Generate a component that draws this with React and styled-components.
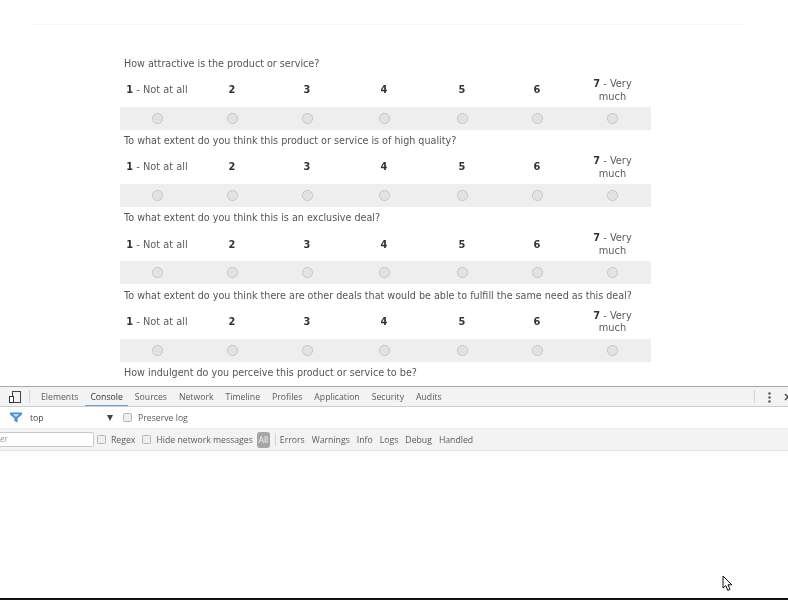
import React from "react";
import styled, { createGlobalStyle } from "styled-components";

const Global = createGlobalStyle`
  html, body { margin: 0; padding: 0; background: #fff; overflow: hidden; }
  #root { width: 788px; height: 600px; overflow: hidden; }
`;

const Page = styled.div`
  width: 788px;
  height: 600px;
  display: flex;
  flex-direction: column;
  overflow: hidden;
  background: #fff;
  filter: blur(0.35px);
`;

const Viewport = styled.main`
  height: 386px;
  flex: none;
  overflow: hidden;
  padding-top: 24px;
  box-sizing: border-box;
`;

const TopRule = styled.div`
  height: 1px;
  margin: 0 44px 0 28px;
  background: #f8f8f8;
`;

const Survey = styled.div`
  margin: 31px 0 0 120px;
  width: 531px;
  font-family: "DejaVu Sans", Verdana, sans-serif;
  color: #4a4a4a;
`;

const Block = styled.section`
  height: 77.2px;
`;

const Question = styled.div`
  height: 16px;
  padding-left: 4px;
  font-size: 9.6px;
  line-height: 16px;
  color: #555;
  white-space: nowrap;
`;

const Scale = styled.div`
  display: grid;
  grid-template-columns: 74px 76px 74px 80px 76px 74px 77px;
`;

const Label = styled.div`
  height: 33px;
  margin-top: 2px;
  padding: 0 12px;
  box-sizing: border-box;
  display: flex;
  align-items: center;
  justify-content: center;
  text-align: center;
  font-size: 9.8px;
  line-height: 12.5px;
  color: #5c5c5c;
  white-space: ${(p) => (p.$wrap ? "normal" : "nowrap")};
  b { color: #333; font-weight: 700; }
`;

const Cell = styled.div`
  height: 23px;
  display: flex;
  align-items: center;
  justify-content: center;
  background: #eeeeee;
`;

const Radio = styled.span`
  width: 9px;
  height: 9px;
  border-radius: 50%;
  border: 1px solid #c2c2c2;
  background: #e2e2e2;
  box-shadow: inset 0 0 1px #fff;
`;

const DevTools = styled.div`
  flex: none;
  height: 64px;
  border-top: 1px solid #a9a9a9;
  font-family: "Open Sans", "Noto Sans", sans-serif;
  font-size: 8.7px;
  color: #5a5a5a;
  overflow: hidden;
`;

const Tabs = styled.div`
  height: 19px;
  display: flex;
  align-items: center;
  background: #f3f3f3;
  border-bottom: 1px solid #cdcdcd;
`;

const DeviceIcon = styled.svg`
  width: 13px;
  height: 13px;
  margin: 1px 0 0 9px;
  flex: none;
`;

const Sep = styled.span`
  width: 1px;
  height: 13px;
  background: #d4d4d4;
  margin: ${(p) => p.$m || "0 6px 0 7px"};
  flex: none;
`;

const Tab = styled.span`
  height: 19px;
  line-height: 21px;
  padding: 0 5px;
  margin-right: ${(p) => p.$mr ?? 2}px;
  box-sizing: border-box;
  white-space: nowrap;
  color: ${(p) => (p.$active ? "#333" : "#5a5a5a")};
  border-bottom: ${(p) => (p.$active ? "1.5px solid #6c9fd8" : "none")};
`;

const Grow = styled.span`
  flex: 1;
`;

const Dots = styled.svg`
  width: 3px;
  height: 11px;
  margin-top: 1px;
  flex: none;
`;

const CloseIcon = styled.svg`
  width: 8px;
  height: 8px;
  margin: 1px -4px 0 13px;
  flex: none;
`;

const FilterRow = styled.div`
  height: 21px;
  display: flex;
  align-items: center;
  background: #fff;
`;

const Funnel = styled.svg`
  width: 12px;
  height: 11px;
  margin-left: 10px;
  flex: none;
`;

const Context = styled.span`
  width: 77px;
  margin-left: 8px;
  color: #444;
  flex: none;
`;

const Caret = styled.span`
  width: 0;
  height: 0;
  border-left: 3.5px solid transparent;
  border-right: 3.5px solid transparent;
  border-top: 6px solid #444;
  margin-right: 10px;
  flex: none;
`;

const Check = styled.span`
  width: 7px;
  height: 7px;
  border: 1px solid #b5b5b5;
  border-radius: 1.5px;
  background: #eee;
  margin-right: ${(p) => p.$mr ?? 5}px;
  flex: none;
`;

const Levels = styled.div`
  height: 21px;
  display: flex;
  align-items: center;
  background: #f3f3f3;
  border-top: 1px solid #eee;
  border-bottom: 1px solid #e2e2e2;
`;

const FilterBox = styled.span`
  width: 93px;
  height: 13px;
  line-height: 13px;
  margin-right: 3px;
  background: #fff;
  border: 1px solid #c8c8c8;
  border-left: none;
  border-radius: 0 2px 2px 0;
  color: #9a9a9a;
  flex: none;
  font-style: italic;
`;

const Opt = styled.span`
  margin-right: ${(p) => p.$mr ?? 6}px;
  white-space: nowrap;
  flex: none;
`;

const All = styled.span`
  width: 13px;
  height: 16px;
  line-height: 16px;
  text-align: center;
  border-radius: 3px;
  background: #a6a6a6;
  color: #f4f4f4;
  flex: none;
`;

const Level = styled.span`
  margin-right: 7px;
  flex: none;
`;

const Blank = styled.div`
  flex: 1;
  display: flex;
  justify-content: flex-end;
  align-items: flex-end;
  padding: 0 55px 6px 0;
`;

const Cursor = styled.svg`
  width: 11px;
  height: 17px;
`;

const BottomBar = styled.div`
  flex: none;
  height: 2px;
  background: #111;
`;

const questions = [
  "How attractive is the product or service?",
  "To what extent do you think this product or service is of high quality?",
  "To what extent do you think this is an exclusive deal?",
  "To what extent do you think there are other deals that would be able to fulfill the same need as this deal?",
  "How indulgent do you perceive this product or service to be?",
];

const tabs = ["Elements", "Console", "Sources", "Network", "Timeline", "Profiles", "Application", "Security", "Audits"];

function Rating() {
  return (
    <Scale>
      <Label><span><b>1</b> - Not at all</span></Label>
      {["2", "3", "4", "5", "6"].map((n) => (
        <Label key={n}><b>{n}</b></Label>
      ))}
      <Label $wrap><span><b>7</b> - Very much</span></Label>
      {[1, 2, 3, 4, 5, 6, 7].map((n) => (
        <Cell key={n}><Radio /></Cell>
      ))}
    </Scale>
  );
}

export default function App() {
  return (
    <Page>
      <Global />
      <Viewport>
        <TopRule />
        <Survey>
          {questions.map((q, i) => (
            <Block key={q}>
              <Question>{q}</Question>
              {i < 4 && <Rating />}
            </Block>
          ))}
        </Survey>
      </Viewport>
      <DevTools>
        <Tabs>
          <DeviceIcon viewBox="0 0 13 13">
            <rect x="3.5" y="0.5" width="8" height="11" fill="none" stroke="#444" strokeWidth="1" />
            <rect x="0.5" y="5.5" width="4" height="6" fill="#fff" stroke="#333" strokeWidth="1" />
          </DeviceIcon>
          <Sep />
          {tabs.map((t) => (
            <Tab key={t} $active={t === "Console"}>{t}</Tab>
          ))}
          <Grow />
          <Sep $m="0 13px 0 0" />
          <Dots viewBox="0 0 3 11">
            <circle cx="1.5" cy="1.5" r="1.2" fill="#555" />
            <circle cx="1.5" cy="5.5" r="1.2" fill="#555" />
            <circle cx="1.5" cy="9.5" r="1.2" fill="#555" />
          </Dots>
          <CloseIcon viewBox="0 0 8 8">
            <path d="M1 1L7 7M7 1L1 7" stroke="#444" strokeWidth="1.4" />
          </CloseIcon>
        </Tabs>
        <FilterRow>
          <Funnel viewBox="0 0 12 11">
            <path d="M0 0.5H12V2.5L7.6 6.2V10.5L4.4 9V6.2L0 2.5Z" fill="#4a90d9" />
            <path d="M2.6 2.2H9.4L6 5Z" fill="#cfe3f5" />
          </Funnel>
          <Context>top</Context>
          <Caret />
          <Check $mr={6} />
          <Opt>Preserve log</Opt>
        </FilterRow>
        <Levels>
          <FilterBox>er</FilterBox>
          <Check />
          <Opt $mr={7}>Regex</Opt>
          <Check />
          <Opt $mr={4}>Hide network messages</Opt>
          <All>All</All>
          <Sep $m="0 4px 0 5px" />
          <Level>Errors</Level>
          <Level>Warnings</Level>
          <Level>Info</Level>
          <Level>Logs</Level>
          <Level>Debug</Level>
          <Level>Handled</Level>
        </Levels>
      </DevTools>
      <Blank>
        <Cursor viewBox="0 0 11 17">
          <path d="M1 1V13L3.8 10.6L5.8 15.4L8 14.4L6 9.8H9.8Z" fill="#fff" stroke="#111" strokeWidth="1" />
        </Cursor>
      </Blank>
      <BottomBar />
    </Page>
  );
}
